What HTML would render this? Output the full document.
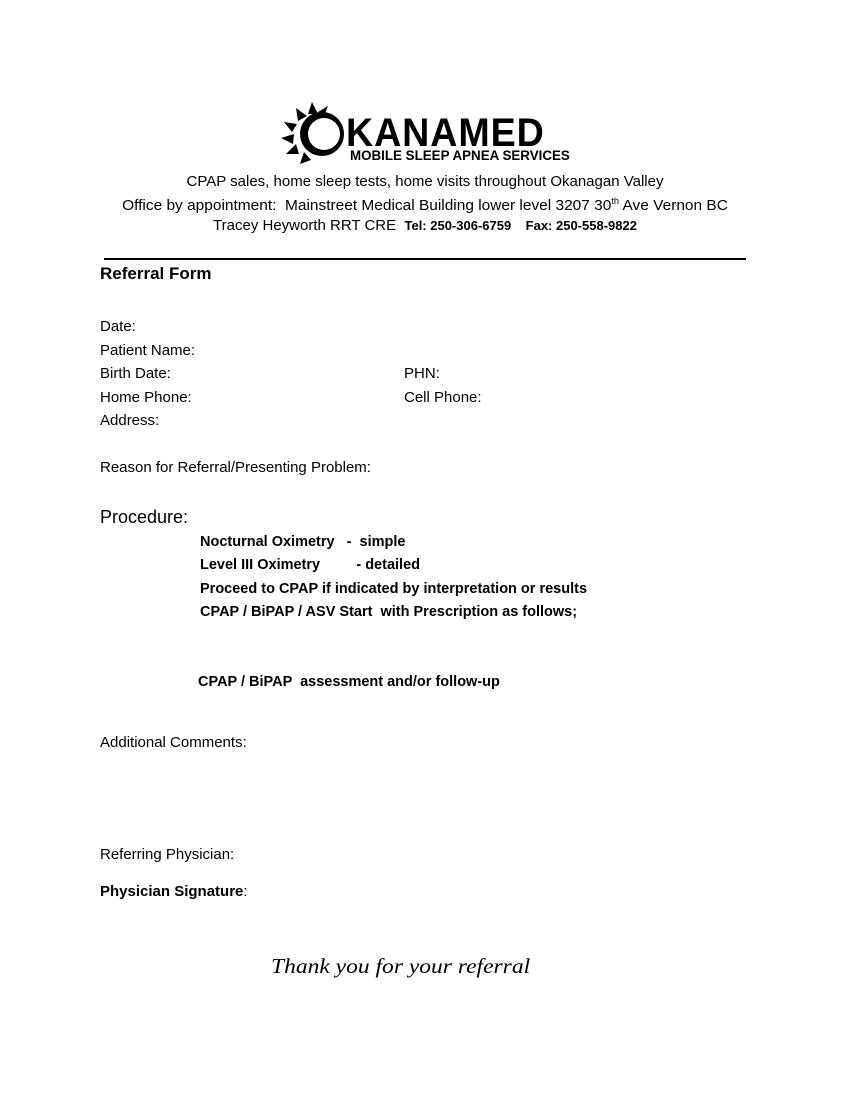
<!DOCTYPE html>
<html><head><meta charset="utf-8"><style>
body{margin:0;background:#fff;}
#p{position:relative;width:850px;height:1100px;overflow:hidden;font-family:"Liberation Sans",sans-serif;color:#000;}
.t{position:absolute;white-space:nowrap;font-size:15px;line-height:20px;transform:scaleX(1.0);transform-origin:left center;}
.c{transform-origin:center center;text-align:center;left:0;width:850px;}
.b{font-weight:bold;font-size:14.5px;}
</style></head><body><div id="p">
<svg style="position:absolute;left:280px;top:100px" width="70" height="68" viewBox="0 0 70 68">
<g fill="#000">
<polygon points="32,2 38,14 28,14"/>
<polygon points="16,8 27,16 18,21"/>
<polygon points="4,22 17,24 12,32"/>
<polygon points="1,38 14,34 13,44"/>
<polygon points="6,54 16,44 19,54"/>
<polygon points="20,64 24,52 31,60"/>
<polygon points="48,6 44,16 38,12"/>
</g>
<circle cx="42" cy="34" r="22" fill="#000"/>
<circle cx="44" cy="34" r="16" fill="#fff"/>
</svg>
<div class="t b" style="left:346px;top:111px;font-size:40px;line-height:44px;transform:scaleX(0.94);letter-spacing:1px">KANAMED</div>
<div class="t b" style="left:350px;top:148px;font-size:13.5px;line-height:16px;transform:scaleX(0.99)">MOBILE SLEEP APNEA SERVICES</div>
<div class="t c" style="top:172px">CPAP sales, home sleep tests, home visits throughout Okanagan Valley</div>
<div class="t c" style="top:191px;transform:scaleX(1.03)">Office by appointment:&nbsp; Mainstreet Medical Building lower level 3207 30<sup style="font-size:9px">th</sup> Ave Vernon BC</div>
<div class="t c" style="top:216px">Tracey Heyworth RRT CRE&nbsp; <b style="font-size:13px">Tel: 250-306-6759&nbsp;&nbsp;&nbsp; Fax: 250-558-9822</b></div>
<div style="position:absolute;left:104px;top:258px;width:642px;height:2px;background:#000"></div>
<div class="t b" style="left:100px;top:264px;font-size:17px">Referral Form</div>
<div class="t" style="left:100px;top:317px">Date:</div>
<div class="t" style="left:100px;top:341px">Patient Name:</div>
<div class="t" style="left:100px;top:364px">Birth Date:</div>
<div class="t" style="left:404px;top:364px">PHN:</div>
<div class="t" style="left:100px;top:388px">Home Phone:</div>
<div class="t" style="left:404px;top:388px">Cell Phone:</div>
<div class="t" style="left:100px;top:411px">Address:</div>
<div class="t" style="left:100px;top:458px">Reason for Referral/Presenting Problem:</div>
<div class="t" style="left:100px;top:507px;font-size:18px">Procedure:</div>
<div class="t b" style="left:200px;top:532px">Nocturnal Oximetry &nbsp; - &nbsp;simple</div>
<div class="t b" style="left:200px;top:555px">Level III Oximetry &nbsp; &nbsp; &nbsp; &nbsp; - detailed</div>
<div class="t b" style="left:200px;top:579px">Proceed to CPAP if indicated by interpretation or results</div>
<div class="t b" style="left:200px;top:602px">CPAP / BiPAP / ASV Start &nbsp;with Prescription as follows;</div>
<div class="t b" style="left:198px;top:672px">CPAP / BiPAP &nbsp;assessment and/or follow-up</div>
<div class="t" style="left:100px;top:733px">Additional Comments:</div>
<div class="t" style="left:100px;top:845px">Referring Physician:</div>
<div class="t" style="left:100px;top:882px"><b>Physician Signature</b>:</div>
<div class="t" style="left:271px;top:954px;font-family:'Liberation Serif',serif;font-style:italic;font-size:21px;line-height:24px;transform:scaleX(1.12)">Thank you for your referral</div>
</div></body></html>
